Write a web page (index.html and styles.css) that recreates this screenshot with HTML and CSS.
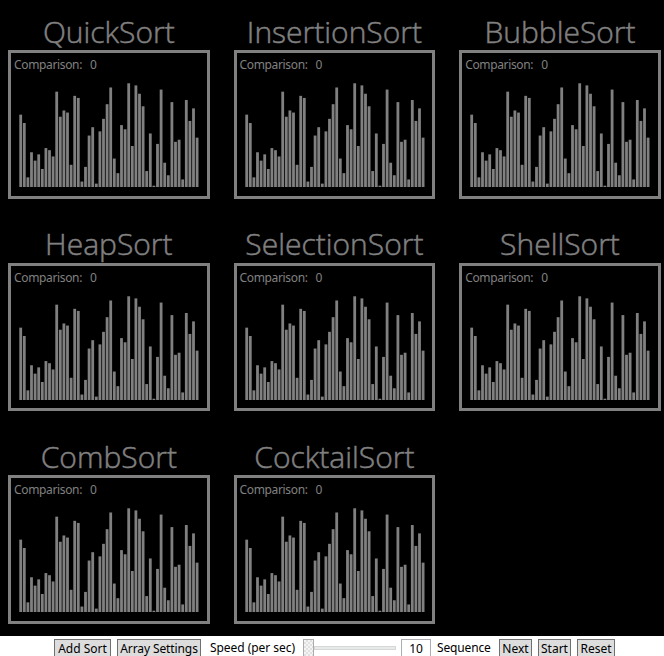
FILE: index.html
```html
<!DOCTYPE html>
<html lang="en">
<head>
<meta charset="utf-8">
<title>Sorting</title>
<link rel="stylesheet" href="styles.css">
</head>
<body>
<main class="board" id="board"></main>
<footer class="toolbar">
  <button class="btn add">Add Sort</button>
  <button class="btn array">Array Settings</button>
  <span class="label speed">Speed (per sec)</span>
  <div class="slider"><span class="thumb"></span><span class="track"></span></div>
  <input class="rate" value="10" aria-label="Speed">
  <span class="label sequence">Sequence</span>
  <button class="btn next">Next</button>
  <button class="btn start">Start</button>
  <button class="btn reset">Reset</button>
</footer>
<script src="script.js"></script>
</body>
</html>
```
FILE: styles.css
```css
* { box-sizing: border-box; }
body {
  margin: 0;
  width: 664px;
  height: 656px;
  overflow: hidden;
  background: #fff;
  font: 12px "Noto Sans", "Open Sans", sans-serif;
}
.board {
  display: grid;
  grid-template-columns: repeat(3, 201.7px);
  grid-auto-rows: 185px;
  gap: 27.7px 23.9px;
  height: 636px;
  padding: 14px 0 0 8px;
  background: #000;
  color: #808080;
  overflow: hidden;
}
.title {
  display: flex;
  justify-content: center;
  height: 36px;
  margin: -0.3px 0 0.3px;
  font: 300 30px/36px "Open Sans", "Noto Sans", sans-serif;
  -webkit-text-stroke: 0.5px #808080;
  white-space: nowrap;
}
.card { display: flow-root; }
.panel {
  height: 148.6px;
  border: 3px solid #808080;
  padding: 3px 0 0 3px;
}
.count {
  display: flex;
  gap: 8px;
  height: 17px;
  line-height: 17px;
  font-size: 12px;
  letter-spacing: -0.35px;
}
.bars {
  display: block;
  width: 190px;
  height: 114px;
  fill: #808080;
}
.toolbar {
  display: flex;
  align-items: flex-start;
  height: 20px;
  padding: 3px 0 0 54px;
  overflow: hidden;
  color: #000;
}
.toolbar > * { flex: none; }
.btn {
  height: 20px;
  padding: 0;
  border: 1px solid #707070;
  background: #ddd;
  color: #000;
  font: inherit;
  line-height: 18px;
  white-space: nowrap;
}
.add { width: 57px; margin-right: 6px; }
.array { width: 84px; margin-right: 9px; letter-spacing: -0.1px; }
.label { line-height: 17px; white-space: nowrap; }
.speed { width: 93px; letter-spacing: -0.05px; }
.slider { display: flex; width: 93px; height: 18px; margin-right: 5px; }
.thumb {
  width: 11px;
  height: 18px;
  border: 1px solid #acacac;
  background: repeating-conic-gradient(#e0e0e0 0 25%, #f5f5f5 0 50%) 0 0 / 4px 4px;
}
.track {
  width: 82px;
  height: 4px;
  margin-top: 7px;
  border: 1px solid #d6d6d6;
  background: #e7eaea;
}
.rate {
  width: 30px;
  height: 19px;
  padding: 0;
  border: 1px solid #abadb3;
  font: inherit;
  line-height: 17px;
  text-align: center;
}
.sequence { width: 62px; padding-left: 6px; margin-right: 6px; letter-spacing: -0.15px; }
.next { width: 33px; margin-right: 6px; }
.start { width: 33px; margin-right: 6px; }
.reset { width: 38px; }
```
FILE: script.js
```js
const names = ["QuickSort", "InsertionSort", "BubbleSort", "HeapSort",
  "SelectionSort", "ShellSort", "CombSort", "CocktailSort"];
const values = [35, 31, 5, 17, 13, 16, 9, 19, 18, 15, 46, 34, 37, 36, 11, 44, 43, 3, 10, 25,
  29, 2, 27, 33, 40, 48, 14, 7, 30, 28, 50, 20, 49, 45, 39, 8, 26, 1, 21, 47,
  12, 6, 41, 22, 23, 4, 42, 32, 38, 24];
const bars = values.map((v, i) => {
  const h = v * 2.09 - 0.8;
  return `<rect x="${(5.3 + i * 3.6).toFixed(2)}" y="${(114 - h).toFixed(2)}" width="2.8" height="${h.toFixed(2)}"/>`;
}).join("");
document.getElementById("board").innerHTML = names.map(name => `
  <section class="card">
    <h2 class="title">${name}</h2>
    <div class="panel">
      <div class="count"><span>Comparison:</span><span>0</span></div>
      <svg class="bars" viewBox="0 0 190 114">${bars}</svg>
    </div>
  </section>`).join("");
```
